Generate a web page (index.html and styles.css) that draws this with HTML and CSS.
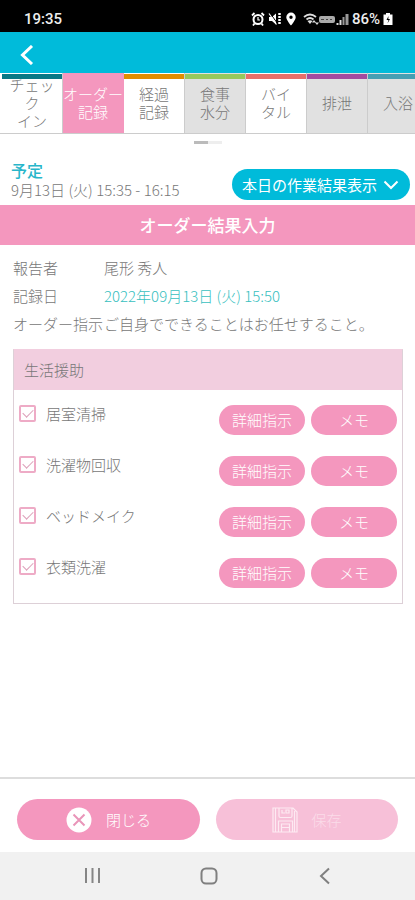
FILE: index.html
```html
<!DOCTYPE html>
<html lang="ja">
<head>
<meta charset="utf-8">
<meta name="viewport" content="width=device-width, initial-scale=1">
<title>オーダー結果入力</title>
<link rel="stylesheet" href="styles.css">
</head>
<body>
<div class="status">
  <span class="clock">19:35</span>
  <div class="status-icons">
    <svg width="14" height="14" viewBox="0 0 14 14" fill="none" stroke="#fff"><circle cx="7" cy="7.5" r="4.5" stroke-width="2"/><path d="M1 3.500 3.500 1M13 3.500 10.500 1M3.500 11.500 2 13.500M10.500 11.500 12 13.500" stroke-width="1.800"/><path d="M7 5v3h2" stroke-width="1.200"/></svg>
    <svg width="14" height="14" viewBox="0 0 14 14"><path d="M1 5h3l4-3.500v11L4 9H1z" fill="#fff"/><path d="M2 1 9.500 11.500" stroke="#000" stroke-width="1"/><path d="M1 1.500 8.500 12.500" stroke="#fff" stroke-width="1.200"/><path d="M11.500 1v12" stroke="#fff" stroke-width="2.500" stroke-dasharray="2 1"/></svg>
    <svg width="12" height="14" viewBox="0 0 10 14"><path fill="#fff" fill-rule="evenodd" d="M5 .5a4.700 4.700 0 0 1 4.700 4.700C9.700 8 5 13.500 5 13.500S.3 8 .3 5.200A4.700 4.700 0 0 1 5 .5zm0 3a1.700 1.700 0 1 0 0 3.400 1.700 1.700 0 0 0 0-3.400z"/></svg>
    <svg class="signal" width="46" height="14" viewBox="0 0 46 14"><g fill="none" stroke="#ddd" stroke-width="1.800"><path d="M1 5q6-5 12 0M3.500 7.500q3.500-3 7 0"/></g><path d="M4.500 9 7 12l2.500-3Q7 7.500 4.500 9zM11 8l2 2.500h-4zM14 13l-2-2.500h4z" fill="#ddd"/><rect x="16" y="4" width="16" height="7" rx="2" fill="#aaa"/><path d="M18 7.500h3M23 7.500h2M27 7.500h2" stroke="#444"/><path d="M34.500 13v-2" stroke="#ddd" stroke-width="2"/><path d="M37.500 13V8" stroke="#ddd" stroke-width="2"/><path d="M40.500 13V5" stroke="#999" stroke-width="2"/><path d="M44 13V2" stroke="#999" stroke-width="3"/></svg>
    <span class="percent">86%</span>
    <svg width="10" height="14" viewBox="0 0 10 14"><path d="M3 1h4v1.500h2.500V13H.5V2.500H3z" fill="#fff"/><path d="M5.500 4 3.500 8h2L4.500 11.500 7 7H5.300z" fill="#000"/></svg>
  </div>
</div>
<header class="appbar">
  <button class="back" aria-label="戻る"><svg width="14" height="20" viewBox="0 0 14 20"><path d="M12 1 2.500 10 12 19" fill="none" stroke="#fff" stroke-width="3"/></svg></button>
</header>
<nav class="tabs">
  <a href="#" class="tab teal">チェッ<br>ク<br>イン</a>
  <a href="#" class="tab current">オーダー<br>記録</a>
  <a href="#" class="tab orange">経過<br>記録</a>
  <a href="#" class="tab green muted">食事<br>水分</a>
  <a href="#" class="tab red">バイ<br>タル</a>
  <a href="#" class="tab purple muted">排泄</a>
  <a href="#" class="tab blue muted">入浴</a>
</nav>
<main>
  <div class="pager"><span class="dash on"></span><span class="dash"></span></div>
  <section class="plan">
    <div class="plan-text">
      <h2>予定</h2>
      <p>9月13日 (火) 15:35 - 16:15</p>
    </div>
    <button class="results">本日の作業結果表示<svg width="16" height="10" viewBox="0 0 16 10"><path d="M1.500 1.500 8 8l6.500-6.500" fill="none" stroke="#fff" stroke-width="2"/></svg></button>
  </section>
  <h1>オーダー結果入力</h1>
  <dl class="facts">
    <div><dt>報告者</dt><dd>尾形 秀人</dd></div>
    <div><dt>記録日</dt><dd class="date">2022年09月13日 (火) 15:50</dd></div>
    <div><dt>オーダー指示</dt><dd>ご自身でできることはお任せすること。</dd></div>
  </dl>
  <section class="panel">
    <h3>生活援助</h3>
    <ul>
      <li><input type="checkbox" id="t1" checked><label for="t1">居室清掃</label><button class="pill">詳細指示</button><button class="pill">メモ</button></li>
      <li><input type="checkbox" id="t2" checked><label for="t2">洗濯物回収</label><button class="pill">詳細指示</button><button class="pill">メモ</button></li>
      <li><input type="checkbox" id="t3" checked><label for="t3">ベッドメイク</label><button class="pill">詳細指示</button><button class="pill">メモ</button></li>
      <li><input type="checkbox" id="t4" checked><label for="t4">衣類洗濯</label><button class="pill">詳細指示</button><button class="pill">メモ</button></li>
    </ul>
  </section>
</main>
<footer class="actions">
  <button class="action"><svg width="26" height="26" viewBox="0 0 26 26"><circle cx="13" cy="13" r="12.500" fill="#fff"/><path d="m7.500 7.500 11 11m0-11-11 11" stroke="#e995b9" stroke-width="2"/></svg>閉じる</button>
  <button class="action" disabled><svg width="26" height="26" viewBox="0 0 26 26" fill="none" stroke="#fdeaf2" stroke-width="1.200"><path d="M1 1h20l4 4v20H1zM3.500 1v24M22.500 4v21M7 1v8q0 1.500 1.500 1.500h10Q20 10.500 20 9V1M10 3v3h3M14 3h3v3h-3zM6.500 25V14h14v11M9.500 25v-8h8v8M9.500 20.500h8"/></svg>保存</button>
</footer>
<nav class="sysbar">
  <button aria-label="履歴"><svg width="18" height="18" viewBox="0 0 18 18"><path d="M2 1v15M8.500 1v15M15 1v15" stroke="#858585" stroke-width="2"/></svg></button>
  <button aria-label="ホーム"><svg width="18" height="18" viewBox="0 0 18 18"><rect x="1.500" y="1.500" width="15" height="15" rx="4.500" fill="none" stroke="#808080" stroke-width="2"/></svg></button>
  <button aria-label="戻る"><svg width="18" height="18" viewBox="0 0 18 18"><path d="M13 1.500 5 9l8 7.500" fill="none" stroke="#808080" stroke-width="2"/></svg></button>
</nav>
</body>
</html>
```
FILE: styles.css
```css
* { box-sizing: border-box; }
body {
  margin: 0;
  min-height: 100vh;
  display: flex;
  flex-direction: column;
  background: #fff;
  color: #777;
  font: 300 15px/20px "Noto Sans CJK JP", sans-serif;
}
h1, h2, h3, p, dl, dd, ul { margin: 0; padding: 0; }
button { font: inherit; border: 0; padding: 0; background: none; color: inherit; }
svg { display: block; flex: none; }

.status {
  height: 32px;
  padding: 6px 22px 0 24px;
  display: flex;
  justify-content: space-between;
  align-items: center;
  background: #000;
  color: #eee;
  font: 500 15px/20px Roboto, sans-serif;
}
.status-icons { display: flex; align-items: center; gap: 3px; }
.signal { margin-left: 3px; }

.appbar {
  height: 41px;
  padding-left: 20px;
  display: flex;
  align-items: center;
  background: #00bbda;
}
.back { padding-top: 4px; }

.tabs {
  display: grid;
  grid-template-columns: repeat(7, 61px);
  height: 61px;
  overflow: hidden;
  border-bottom: 1px solid #ccc;
  padding-left: 2px;
}
.tab {
  position: relative;
  display: flex;
  align-items: center;
  justify-content: center;
  text-align: center;
  white-space: nowrap;
  border-right: 1px solid #ccc;
  background: #fff;
  color: #777;
  font-size: 15px;
  line-height: 18px;
  text-decoration: none;
}
.tab::before {
  content: "";
  position: absolute;
  inset: 1px 0 auto;
  height: 5px;
  background: var(--bar);
}
.muted { background: #e1e1e1; }
.current { background: #f497be; color: #fff; border-color: #f497be; --bar: #f497be; }
.teal { --bar: #087985; }
.orange { --bar: #e18d00; }
.green { --bar: #96c85c; }
.red { --bar: #e76f6a; }
.purple { --bar: #a34b9f; }
.blue { --bar: #469fb3; }

main { flex: 1; }
.pager { display: flex; justify-content: center; padding-top: 7px; height: 26px; }
.dash { width: 14px; height: 3px; background: #eee; }
.dash.on { background: #bbb; }

.plan {
  display: flex;
  justify-content: space-between;
  align-items: center;
  padding: 0 5px 5px 11px;
  height: 45px;
}
.plan h2 { color: #28b6ca; font-size: 16px; line-height: 20px; font-weight: 500; }
.results {
  display: flex;
  align-items: center;
  gap: 6px;
  height: 31px;
  margin-top: 9px;
  padding: 0 11px 0 10px;
  border-radius: 16px;
  background: #00bbda;
  color: #fff;
  font-weight: 400;
}
h1 {
  background: #f497be;
  color: #fff;
  text-align: center;
  font-size: 17px;
  line-height: 40px;
  font-weight: 500;
}

.facts { padding: 9px 13px 0; }
.facts div { display: flex; line-height: 28px; }
.facts dt { min-width: 91px; white-space: nowrap; }
.facts .date { color: #38bfc0; }

.panel { margin: 11px 12px 0 13px; border: 1px solid #ddd0d7; border-top-color: #f2cedf; }
.panel h3 {
  padding-left: 10px;
  background: #f2cedf;
  font-size: 15px;
  line-height: 40px;
  font-weight: 300;
}
.panel ul { list-style: none; padding: 15px 5px; }
.panel li { display: flex; align-items: flex-start; height: 30px; }
.panel li + li { margin-top: 21px; }
.panel label { flex: 1; padding-left: 10px; line-height: 18px; }
.panel input {
  appearance: none;
  width: 17px;
  height: 17px;
  margin: 0;
  border: 2px solid #eeabc6;
  border-radius: 2px;
  display: flex;
  justify-content: center;
}
.panel input:checked::before {
  content: "";
  width: 9px;
  height: 5px;
  margin-top: 2px;
  border: solid #dda0ba;
  border-width: 0 0 1px 1px;
  transform: rotate(-45deg);
}
.pill {
  width: 86px;
  height: 30px;
  margin-left: 6px;
  border-radius: 15px;
  background: #f497be;
  color: #fff;
}

.actions {
  display: grid;
  grid-template-columns: 1fr 1fr;
  gap: 16px;
  padding: 20px 17px 12px;
  border-top: 2px solid #ddd;
}
.action {
  display: flex;
  align-items: center;
  gap: 14px;
  height: 41px;
  padding-left: 49px;
  border-radius: 21px;
  background: #f497be;
  color: #fff;
}
.action:disabled { padding-left: 56px; background: #f7c0d8; color: #fbdce9; }

.sysbar {
  height: 48px;
  padding: 0 32px 0 35px;
  display: grid;
  grid-template-columns: repeat(3, 1fr);
  align-items: center;
  background: #f1f1f1;
}
.sysbar button { display: flex; justify-content: center; }
```
